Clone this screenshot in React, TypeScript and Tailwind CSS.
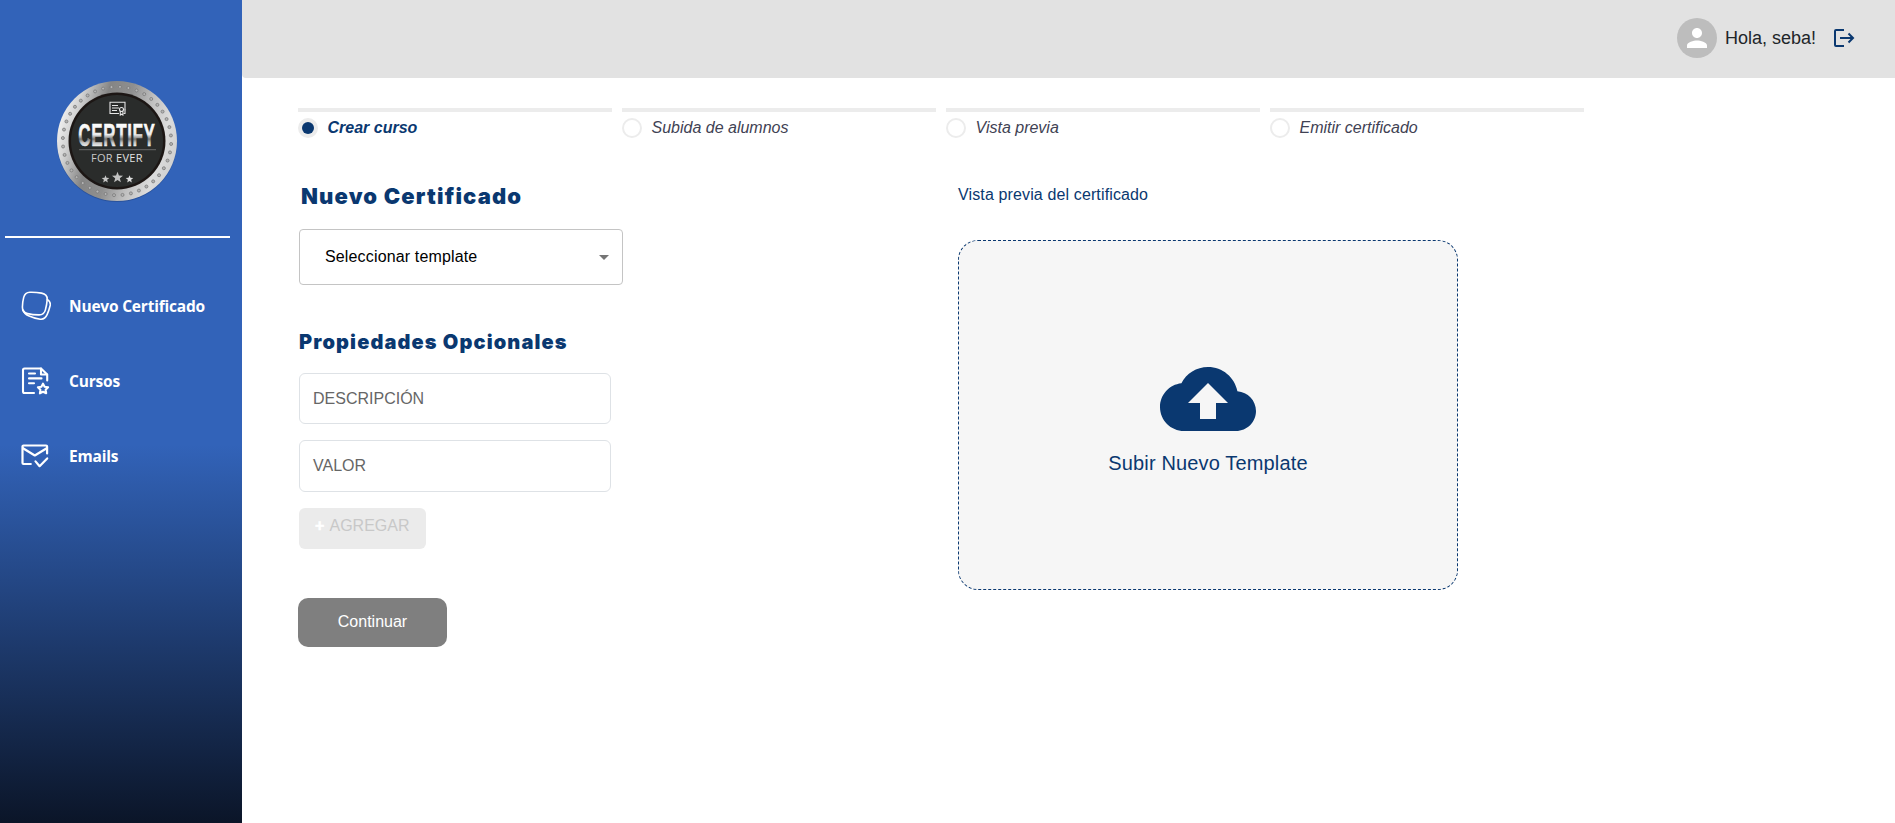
import React from "react";

const steps = ["Crear curso", "Subida de alumnos", "Vista previa", "Emitir certificado"];

function star(cx: number, cy: number, r: number) {
  const pts: string[] = [];
  for (let i = 0; i < 10; i++) {
    const a = -Math.PI / 2 + (i * Math.PI) / 5;
    const k = i % 2 ? r * 0.42 : r;
    pts.push(`${(cx + k * Math.cos(a)).toFixed(2)},${(cy + k * Math.sin(a)).toFixed(2)}`);
  }
  return pts.join(" ");
}

function Logo() {
  const rivets = Array.from({ length: 40 }, (_, i) => {
    const a = ((i + 0.35) * Math.PI * 2) / 40;
    return { x: 60 + 54.2 * Math.cos(a), y: 60 + 54.2 * Math.sin(a) };
  });
  return (
    <svg width="120" height="122" viewBox="0 0 120 122" className="block">
      <defs>
        <linearGradient id="rim" x1="0" y1="0.35" x2="1" y2="0.65">
          <stop offset="0" stopColor="#f2f2f2" />
          <stop offset="0.12" stopColor="#d4d4d4" />
          <stop offset="0.32" stopColor="#858585" />
          <stop offset="0.5" stopColor="#8f8f8f" />
          <stop offset="0.68" stopColor="#c0c0c0" />
          <stop offset="0.85" stopColor="#dcdcdc" />
          <stop offset="1" stopColor="#cfcfcf" />
        </linearGradient>
        <linearGradient id="steel" gradientUnits="userSpaceOnUse" x1="0" y1="-23" x2="0" y2="0">
          <stop offset="0" stopColor="#ffffff" />
          <stop offset="0.5" stopColor="#ececec" />
          <stop offset="0.7" stopColor="#747474" />
          <stop offset="0.85" stopColor="#c4c4c4" />
          <stop offset="1" stopColor="#ececec" />
        </linearGradient>
      </defs>
      <circle cx="60" cy="61" r="60" fill="#1f3f7a" opacity="0.45" />
      <circle cx="60" cy="60" r="60" fill="url(#rim)" />
      {rivets.map((p, i) => (
        <circle key={i} cx={p.x} cy={p.y} r="1.5" fill="#b5b5b5" stroke="#7a7a7a" strokeWidth="0.8" />
      ))}
      <circle cx="60" cy="60" r="48.5" fill="#1c1614" />
      <circle cx="60" cy="60" r="46" fill="#2a2c2b" />
      <g fill="none" stroke="#e6e6e6" strokeWidth="1.1">
        <path d="M62 32.5h-9V21.300h15v8" />
        <path d="M55 24.500h6M55 27h7M55 29.500h5" />
        <circle cx="64.500" cy="28.500" r="2" />
        <path d="M63.300 30.500v3.500l1.300-.8 1.300.8v-3.500" />
        <path d="M66.500 32.500H68v-4" />
      </g>
      <g transform="translate(21.300 65) scale(0.540 1)">
        <text x="0" y="0" fontFamily="'Liberation Sans',sans-serif" fontWeight="700" fontSize="31.500" letterSpacing="1.200" fill="url(#steel)" stroke="url(#steel)" strokeWidth="0.700">
          CERTIFY
        </text>
      </g>
      <path d="M22 68.700h77" stroke="#777" strokeWidth="0.8" />
      <text x="34" y="81" fontFamily="'Open Sans',sans-serif" fontSize="11" letterSpacing="0.300" fill="#c9c9c9">
        FOR <tspan fontWeight="500" fill="#e2e2e2">EVER</tspan>
      </text>
      <polygon points={star(48.500, 98.200, 4)} fill="#c6c6c6" />
      <polygon points={star(60.500, 96.500, 5.800)} fill="#c2c2c2" />
      <polygon points={star(72.500, 98.200, 4)} fill="#dedede" />
    </svg>
  );
}

function CertificateIcon() {
  return (
    <svg width="30" height="30" viewBox="0 0 30 30" fill="none" stroke="#fff" strokeWidth="1.600" strokeLinecap="round" strokeLinejoin="round">
      <path d="M8.800 1.200C12.500 1.100 17 1.400 20.500 2.100c3.900.7 5.900 2.800 5.700 6.300-.2 3.200-.8 7-1.800 10.500-1 3.700-3.100 5.100-6.600 5-3.700-.1-7.700-.5-11.200-1.300-3.700-.9-5.300-3-5.200-6.700.1-3.200.5-6.500 1.300-9.500C3.600 2.900 5.500 1.300 8.800 1.200Z" />
      <path d="M26.300 8.400c2.500 1.600 3.500 3.600 2.800 6.400-.7 3-1.700 6-3 8.900-1.400 3.200-3.500 4.900-6.900 4.500-4-.6-8-1.800-11.700-3.500-2.600-1.200-4.600-3-5.600-5.600" />
    </svg>
  );
}

function CoursesIcon() {
  return (
    <svg width="30" height="28" viewBox="0 0 30 28" fill="none" stroke="#fff" strokeWidth="2.100" strokeLinecap="round" strokeLinejoin="round">
      <path d="M13 26H3.500A1.500 1.500 0 0 1 2 24.500V3a1.500 1.500 0 0 1 1.500-1.500h16.500L26.200 7.500v6" />
      <path d="M20 1.500v6h6M8 6.500h6M8 11.400h12.500M8 16.200h5" />
      <path d="m22 16.600 1.600 3.200 3.500.5-2.500 2.500.6 3.500-3.200-1.600-3.100 1.600.5-3.500-2.500-2.500 3.500-.5Z" />
    </svg>
  );
}

function MailIcon() {
  return (
    <svg width="30" height="24" viewBox="0 0 30 24" fill="none" stroke="#fff" strokeWidth="2.200" strokeLinecap="round" strokeLinejoin="round">
      <path d="M9.800 20H2.500a1 1 0 0 1-1-1V2.500a1 1 0 0 1 1-1h22.600a1 1 0 0 1 1 1v7" />
      <path d="m2 4.200 11.800 7.300L25.700 4.200M14.500 17.400l4.100 4.800 7.600-7.800" />
    </svg>
  );
}

function LogoutIcon() {
  return (
    <svg width="21" height="20" viewBox="0 0 21 20" fill="none" stroke="#0a3870" strokeWidth="2" className="block">
      <path d="M10 2H2a1 1 0 0 0-1 1v14a1 1 0 0 0 1 1H10" />
      <path d="M6 10h13M14.500 5.500 19 10l-4.500 4.500" />
    </svg>
  );
}

const nav = [
  { label: "Nuevo Certificado", icon: <CertificateIcon /> },
  { label: "Cursos", icon: <CoursesIcon /> },
  { label: "Emails", icon: <MailIcon /> },
];

export default function App() {
  return (
    <div className="flex h-[823px] w-full overflow-hidden bg-white font-['Liberation_Sans',Arial,sans-serif] text-base">
      <aside className="flex w-[242px] shrink-0 flex-col bg-[linear-gradient(180deg,#3263b9_0%,#3263b9_54%,#0b1528_100%)]">
        <div className="pt-[81px] pl-[57px]">
          <Logo />
        </div>
        <div className="mt-[33px] ml-[5px] h-0.5 w-[225px] bg-white" />
        <nav className="mt-[30px] flex flex-col">
          {nav.map((n) => (
            <a key={n.label} className="flex h-[75px] items-center pl-[21px]">
              <span className="flex w-12 items-center">{n.icon}</span>
              <span className="pt-[3px] font-['Open_Sans','Noto_Sans',sans-serif] text-[15.500px] font-bold tracking-[-0.200px] whitespace-nowrap text-white">{n.label}</span>
            </a>
          ))}
        </nav>
      </aside>

      <div className="flex min-w-0 flex-1 flex-col">
        <header className="flex h-[78px] items-center justify-end rounded-bl-[4px] bg-[#e2e2e2] pr-10 pb-0.5">
          <div className="flex size-10 items-center justify-center rounded-full bg-[#bdbdbd]">
            <svg width="30" height="30" viewBox="0 0 24 24" fill="#fff">
              <path d="M12 12c2.210 0 4-1.790 4-4s-1.790-4-4-4-4 1.790-4 4 1.790 4 4 4zm0 2c-2.670 0-8 1.340-8 4v2h16v-2c0-2.660-5.330-4-8-4z" />
            </svg>
          </div>
          <span className="ml-2 w-[109px] text-lg text-[#212529]">Hola, seba!</span>
          <LogoutIcon />
        </header>

        <main className="flex flex-col pt-[30px] pl-14">
          <ol className="flex gap-2.5">
            {steps.map((s, i) => (
              <li key={s} className="w-[314px] border-t-4 border-[#ececec] pt-1.5">
                <div className="flex h-5 items-center gap-[9.500px]">
                  <span className={i === 0 ? "flex size-5 items-center justify-center rounded-full bg-[#ececec]" : "size-5 rounded-full border-2 border-[#ececec]"}>
                    {i === 0 && <span className="size-3 rounded-full bg-[#0a3870]" />}
                  </span>
                  <span className={i === 0 ? "font-bold text-[#0a3870] italic" : "text-[#3f4254] italic"}>{s}</span>
                </div>
              </li>
            ))}
          </ol>

          <div className="flex">
            <section className="flex w-[660px] flex-col items-start">
              <h1 className="mt-11 ml-[3px] font-['Inter','Liberation_Sans',sans-serif] text-[22px] leading-7 font-black tracking-[1.150px] text-[#0a3870]">Nuevo Certificado</h1>
              <div className="mt-[19px] ml-px flex h-14 w-[324px] items-center justify-between rounded border border-[#c4c4c4] pr-[13px] pl-[25px] text-black">
                <span className="tracking-[0.150px]">Seleccionar template</span>
                <span className="border-x-5 border-t-5 border-x-transparent border-t-[#757575]" />
              </div>
              <h2 className="mt-[43px] ml-px font-['Inter','Liberation_Sans',sans-serif] text-xl leading-7 font-black tracking-[1.130px] text-[#0a3870]">Propiedades Opcionales</h2>
              <div className="mt-[17px] ml-px flex h-[51px] w-[312px] items-center rounded-md border border-[#dee2e6] pl-[13px] text-[#666]">DESCRIPCIÓN</div>
              <div className="mt-4 ml-px flex h-[52px] w-[312px] items-center rounded-md border border-[#dee2e6] pl-[13px] text-[#666]">VALOR</div>
              <button className="mt-4 ml-px flex h-[41px] w-[127px] items-start rounded-md bg-[#ebebeb] pt-[5.500px] pl-4 text-[#c8c8c8]">
                <span className="w-[14.500px] text-left font-black text-white [-webkit-text-stroke:0.500px_white]">+</span>AGREGAR
              </button>
              <button className="mt-[49px] h-[49px] w-[149px] rounded-[10px] bg-[#7f7f7f] pb-0.5 text-white">Continuar</button>
            </section>

            <section className="mt-[45px] flex flex-col">
              <p className="tracking-[0.130px] text-[#0a3870]">Vista previa del certificado</p>
              <div className="mt-[33px] flex h-[350px] w-[500px] flex-col items-center rounded-[20px] border border-dashed border-[#0a3870] bg-[#f6f6f6] pt-[110px] text-[#0a3870]">
                <svg width="96" height="96" viewBox="0 0 24 24" fill="currentColor">
                  <path d="M19.350 10.040C18.670 6.590 15.640 4 12 4 9.110 4 6.600 5.640 5.350 8.040 2.340 8.360 0 10.910 0 14c0 3.310 2.690 6 6 6h13c2.760 0 5-2.240 5-5 0-2.640-2.050-4.780-4.650-4.960zM14 13v4h-4v-4H7l5-5 5 5h-3z" />
                </svg>
                <p className="mt-0.5 text-xl tracking-[0.150px]">Subir Nuevo Template</p>
              </div>
            </section>
          </div>
        </main>
      </div>
    </div>
  );
}
